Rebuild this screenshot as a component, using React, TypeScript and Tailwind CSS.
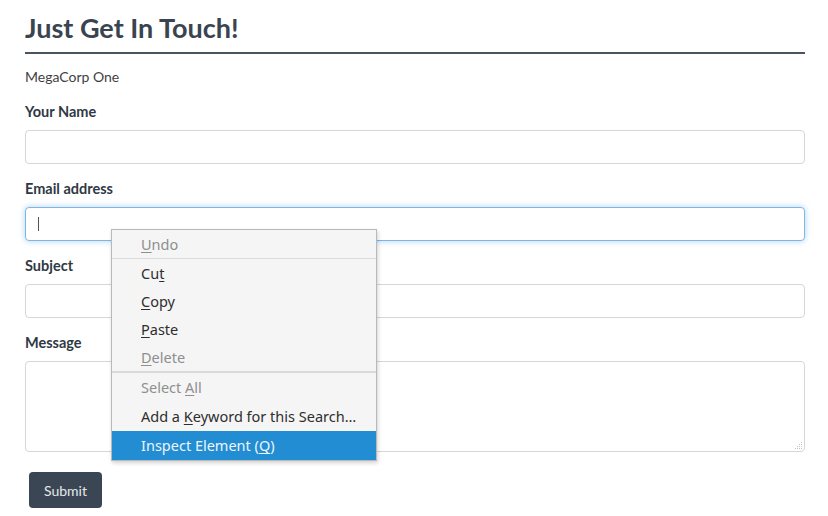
import React from 'react';

// pieces of the context menu
type Item = { pre: string; key: string; post: string; disabled?: boolean; active?: boolean };

const topItems: Item[] = [{ pre: '', key: 'U', post: 'ndo', disabled: true }];
const editItems: Item[] = [
  { pre: 'Cu', key: 't', post: '' },
  { pre: '', key: 'C', post: 'opy' },
  { pre: '', key: 'P', post: 'aste' },
  { pre: '', key: 'D', post: 'elete', disabled: true },
];
const lastItems: Item[] = [
  { pre: 'Select ', key: 'A', post: 'll', disabled: true },
  { pre: 'Add a ', key: 'K', post: 'eyword for this Search…' },
  { pre: 'Inspect Element (', key: 'Q', post: ')', active: true },
];

const MenuRow = ({ item, tall }: { item: Item; tall?: boolean }) => (
  <div
    className={
      (tall ? 'h-[29px] leading-[29px] ' : 'h-[28px] leading-[28px] ') +
      'pl-[29px] text-[14.5px] ' +
      (item.active ? 'bg-[#228dd3] text-[#eef5fb]' : item.disabled ? 'text-[#8f8f8f]' : 'text-[#2e2e2e]')
    }
  >
    {item.pre}
    <span className="underline underline-offset-2">{item.key}</span>
    {item.post}
  </div>
);

const ContextMenu = () => (
  <div
    className="absolute left-[111px] top-[229px] w-[266px] bg-[#f5f5f5] border border-[#b9b9b9] shadow-[1px_2px_4px_rgba(0,0,0,0.18)]"
    style={{ fontFamily: '"Noto Sans", "Open Sans", sans-serif' }}
  >
    {topItems.map((i) => <MenuRow key={i.post} item={i} />)}
    <div className="h-px bg-[#dadada]" />
    {editItems.map((i) => <MenuRow key={i.post + i.key} item={i} />)}
    <div className="h-[2px] bg-[#dadada]" />
    {lastItems.map((i) => <MenuRow key={i.post + i.key} item={i} tall />)}
  </div>
);

const Label = ({ children }: { children: React.ReactNode }) => (
  <div className="h-[20px] leading-[20px] mb-[8px] text-[14.5px] font-bold text-[#2f3945]">{children}</div>
);

const inputCls = 'block w-full h-[34px] rounded-[4px] border border-[#d6d6d6] bg-white outline-none';

export default function App() {
  return (
    <div className="relative w-[828px] h-[516px] bg-white overflow-hidden" style={{ fontFamily: 'Lato, "Open Sans", sans-serif' }}>
      <div className="pl-[25px] pr-[23px] pt-[10px]">
        <h1 className="text-[27px] leading-[36px] font-bold text-[#3a4451] pb-[6px] border-b-2 border-[#4a5461]">
          Just Get In Touch!
        </h1>
        <div className="mt-[13px] h-[20px] leading-[20px] text-[14px] text-[#3f3f3f]">MegaCorp One</div>

        <div className="mt-[15px]">
          <Label>Your Name</Label>
          <input className={inputCls} />
        </div>

        <div className="mt-[15px]">
          <Label>Email address</Label>
          <div className="relative">
            <input className="block w-full h-[34px] rounded-[4px] border border-[#7fb6e6] bg-white outline-none shadow-[0_0_6px_rgba(102,175,233,0.55)]" />
            <span className="absolute left-[13px] top-[10px] w-px h-[14px] bg-[#555]" />
          </div>
        </div>

        <div className="mt-[15px]">
          <Label>Subject</Label>
          <input className={inputCls} />
        </div>

        <div className="mt-[15px]">
          <Label>Message</Label>
          <div className="relative">
            <textarea className="block w-full h-[91px] rounded-[4px] border border-[#d6d6d6] bg-white outline-none resize-none" />
            <svg className="absolute right-[2px] bottom-[2px]" width="9" height="9" viewBox="0 0 9 9">
              <g fill="#c4c4c4">
                <rect x="7" y="1" width="1" height="1" />
                <rect x="7" y="3" width="1" height="1" />
                <rect x="5" y="3" width="1" height="1" />
                <rect x="7" y="5" width="1" height="1" />
                <rect x="5" y="5" width="1" height="1" />
                <rect x="3" y="5" width="1" height="1" />
                <rect x="7" y="7" width="1" height="1" />
                <rect x="5" y="7" width="1" height="1" />
                <rect x="3" y="7" width="1" height="1" />
                <rect x="1" y="7" width="1" height="1" />
              </g>
            </svg>
          </div>
        </div>

        <button className="mt-[20px] ml-[4px] w-[73px] h-[36px] rounded-[4px] bg-[#3a4654] text-[14px] text-[#e6e9ec]">
          Submit
        </button>
      </div>

      <ContextMenu />
    </div>
  );
}
